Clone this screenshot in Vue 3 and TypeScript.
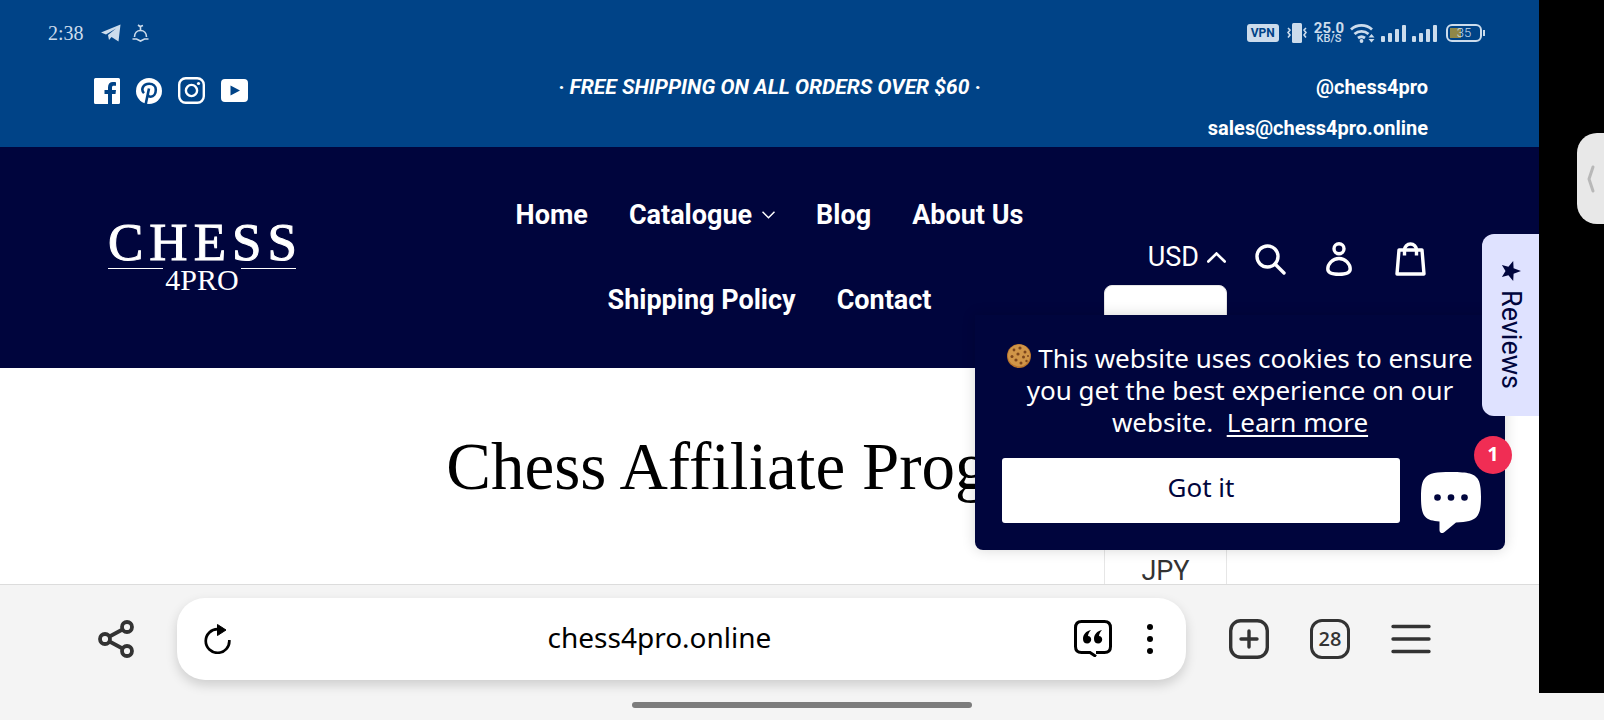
<script setup lang="ts">
import { ref } from 'vue'

interface NavItem {
  label: string
  hasMenu?: boolean
}

const navItems: NavItem[] = [
  { label: 'Home' },
  { label: 'Catalogue', hasMenu: true },
  { label: 'Blog' },
  { label: 'About Us' },
  { label: 'Shipping Policy' },
  { label: 'Contact' },
]

const currency = ref('USD')
const currencyOpen = ref(true)
const cookieVisible = ref(true)
const address = ref('chess4pro.online')
const tabCount = ref(28)
const unread = ref(1)
</script>

<template>
  <div class="device">
    <div class="main-row">
      <div class="screen">
        <div class="viewport">
          <div class="status">
            <span class="clock">2:38</span>
            <svg class="telegram" width="20" height="18" viewBox="0 0 20 18">
              <path d="M0 8.5 19.5 0.5 17.5 17.5 10.5 13 8 16 7 11 15 4.5 5 10.5Z" fill="currentColor" />
            </svg>
            <svg class="cloche" width="17" height="18" viewBox="0 0 17 18" fill="none" stroke="currentColor" stroke-width="1.6">
              <path d="M2.500 13C2.500 9 5 6.500 8.500 6.500s6 2.500 6 6.500M.5 15h4l4 2 4-2h4" />
              <path d="M6 1l2 1.500L11 1.500M8.500 2.500v4" />
            </svg>
            <div class="status-right">
              <span class="vpn">VPN</span>
              <svg class="vibrate" width="20" height="20" viewBox="0 0 20 20">
                <rect x="5" y="0" width="10" height="20" rx="1.500" fill="currentColor" />
                <path d="M1 5l2 2-2 2.500 2 2.500-2 2.500M19 5l-2 2 2 2.500-2 2.500 2 2.500" fill="none" stroke="currentColor" stroke-width="1.600" />
              </svg>
              <span class="speed"><b>25.0</b><span>KB/S</span></span>
              <svg class="wifi" width="25" height="20" viewBox="0 0 25 20">
                <g fill="none" stroke="currentColor" stroke-width="2.800">
                  <path d="M1 6.500a15.500 15.500 0 0 1 21 0" />
                  <path d="M4.500 11a10.500 10.500 0 0 1 14 0" />
                  <path d="M8 15a6 6 0 0 1 7 0" />
                </g>
                <circle cx="11.500" cy="18" r="1.900" fill="currentColor" />
                <path d="M18.500 14.500 21.500 11l3 3.500ZM18.500 16l3 3.500 3-3.500Z" fill="currentColor" />
              </svg>
              <svg v-for="n in 2" :key="n" class="signal" width="25" height="17" viewBox="0 0 25 17" fill="currentColor">
                <rect x="0" y="11" width="4" height="6" rx="1" />
                <rect x="7" y="8" width="4" height="9" rx="1" />
                <rect x="14" y="4" width="4" height="13" rx="1" />
                <rect x="21" y="0" width="4" height="17" rx="1" />
              </svg>
              <span class="battery"><span>35</span></span>
            </div>
          </div>

          <div class="topbar">
            <div class="social">
              <a href="#" aria-label="Facebook">
                <svg width="26" height="26" viewBox="0 0 26 26">
                  <path d="M1.500 0h23A1.500 1.500 0 0 1 26 1.500v23a1.500 1.500 0 0 1-1.500 1.500H18V16h3.500l.5-4h-4V9.500C18 8.300 18.500 7.700 19.800 7.700H22V4.200C21.500 4.100 20.300 4 19 4c-3 0-5 1.800-5 5.200V12h-3.500v4H14v10H1.500A1.500 1.500 0 0 1 0 24.500v-23A1.500 1.500 0 0 1 1.500 0Z" fill="currentColor" />
                </svg>
              </a>
              <a href="#" aria-label="Pinterest">
                <svg width="26" height="26" viewBox="0 0 26 26">
                  <circle cx="13" cy="13" r="13" fill="currentColor" />
                  <path d="M9.500 27 13 10.500M8 15.200C4.500 11.500 7 5.800 13.200 5.800c4 0 6.600 2.500 6.600 5.900 0 4.300-2.300 7-5 7-1.500 0-2.700-.8-3-2" fill="none" stroke="#004387" stroke-width="2.600" />
                </svg>
              </a>
              <a href="#" aria-label="Instagram">
                <svg width="27" height="27" viewBox="0 0 27 27" fill="none" stroke="currentColor" stroke-width="2.400">
                  <rect x="1.200" y="1.200" width="24.600" height="24.600" rx="6.500" />
                  <circle cx="13.500" cy="13.500" r="5.600" />
                  <circle cx="20.500" cy="6.500" r="1.600" fill="currentColor" stroke="none" />
                </svg>
              </a>
              <a href="#" aria-label="YouTube">
                <svg width="27" height="23" viewBox="0 0 27 23">
                  <path fill-rule="evenodd" d="M4 0h19a4 4 0 0 1 4 4v15a4 4 0 0 1-4 4H4a4 4 0 0 1-4-4V4a4 4 0 0 1 4-4Zm5.500 6.500v10L19 11.500Z" fill="currentColor" />
                </svg>
              </a>
            </div>
            <div class="promo">· FREE SHIPPING ON ALL ORDERS OVER $60 ·</div>
            <div class="contact">
              <a href="#">@chess4pro</a>
              <a href="#">sales@chess4pro.online</a>
            </div>
          </div>

          <header class="header">
            <a href="#" class="logo">
              <span class="logo-top">CHESS</span>
              <span class="logo-bottom">4PRO</span>
            </a>
            <nav class="nav">
              <a v-for="item in navItems" :key="item.label" href="#">
                {{ item.label }}
                <svg v-if="item.hasMenu" width="13" height="8" viewBox="0 0 13 8" fill="none" stroke="currentColor" stroke-width="1.500">
                  <path d="M.5.8 6.500 6.800 12.500.8" />
                </svg>
              </a>
            </nav>
            <div class="tools">
              <div class="currency">
                <button type="button" class="currency-button" :aria-expanded="currencyOpen" @click="currencyOpen = !currencyOpen">
                  {{ currency }}
                  <svg width="19" height="11" viewBox="0 0 19 11" fill="none" stroke="currentColor" stroke-width="2.600" stroke-linecap="round">
                    <path d="M1.300 9.500 9.500 1.500 17.700 9.500" />
                  </svg>
                </button>
                <div v-if="currencyOpen" class="currency-menu">
                  <button type="button" @click="currency = 'JPY'">JPY</button>
                </div>
              </div>
              <button type="button" class="tool search" aria-label="Search">
                <svg width="31" height="31" viewBox="0 0 31 31" fill="none" stroke="currentColor" stroke-width="3.400" stroke-linecap="round">
                  <circle cx="12.500" cy="12.500" r="10.500" />
                  <path d="M20 20l9 9" />
                </svg>
              </button>
              <button type="button" class="tool" aria-label="Account">
                <svg width="26" height="34" viewBox="0 0 26 34" fill="none" stroke="currentColor" stroke-width="3.400">
                  <circle cx="13" cy="6.800" r="5" />
                  <path d="M13 16.500c-6.500 0-11.200 5.500-11.200 10.500 0 3.500 4 5.300 11.200 5.300s11.200-1.800 11.200-5.300c0-5-4.700-10.500-11.200-10.500Z" />
                </svg>
              </button>
              <button type="button" class="tool" aria-label="Cart">
                <svg width="31" height="34" viewBox="0 0 31 34" fill="none" stroke="currentColor" stroke-width="3.400" stroke-linejoin="round">
                  <path d="M4 8h23l2 24h-27Z" />
                  <path d="M9.500 13.500V8a6 6 0 0 1 12 0v5.500" />
                </svg>
              </button>
            </div>
          </header>

          <main class="hero">
            <h1>Chess Affiliate Program</h1>
          </main>

          <section v-if="cookieVisible" class="cookie">
            <p>
              <svg class="biscuit" width="24" height="24" viewBox="0 0 24 24">
                <circle cx="12" cy="12" r="12" fill="#b9742c" />
                <circle cx="12" cy="11.500" r="11" fill="#d09548" />
                <g fill="#7d461c">
                  <circle cx="7" cy="6" r="1.400" /><circle cx="13" cy="4" r="1.600" /><circle cx="18" cy="8" r="1.500" />
                  <circle cx="11" cy="10" r="1.600" /><circle cx="5" cy="12.500" r="1.500" /><circle cx="16.500" cy="13" r="1.500" />
                  <circle cx="9" cy="16" r="1.600" /><circle cx="14" cy="19" r="1.500" /><circle cx="19.500" cy="17" r="1.200" />
                  <circle cx="21" cy="12" r="1" />
                </g>
              </svg>
              This website uses cookies to ensure you get the best experience on our website.&nbsp;
              <a href="#">Learn more</a>
            </p>
            <button type="button" class="accept" @click="cookieVisible = false">Got it</button>
          </section>

          <button type="button" class="chat" aria-label="Chat">
            <svg width="60" height="61" viewBox="0 0 60 61">
              <path d="M30 0C48 0 53 2 56.500 6.500 59 10 60 16 60 25c0 10-1 16-4.500 20C52 48.500 46 50 35 50.500L23.500 60c-2.500 2-5 1-5-2v-8.500C12 49 7 48 4 44.500 1 41 0 35 0 25 0 15 1 9 4.500 5.500 8.500 1 15 0 30 0Z" fill="#fff" />
              <g fill="#00053d"><circle cx="16.500" cy="25.500" r="3.300" /><circle cx="30" cy="25.500" r="3.300" /><circle cx="43.500" cy="25.500" r="3.300" /></g>
            </svg>
            <span class="chat-badge">{{ unread }}</span>
          </button>

          <button type="button" class="reviews">
            <svg width="20" height="20" viewBox="0 0 20 20">
              <path d="M20 10 12.600 12.700 12.200 20 7.400 14.300.9 16 4.500 10 .9 4 7.400 5.700 12.200 0l.4 7.300Z" fill="currentColor" />
            </svg>
            <span>Reviews</span>
          </button>
        </div>

        <footer class="browser">
          <button type="button" class="share" aria-label="Share">
            <svg width="36" height="38" viewBox="0 0 36 38" fill="none" stroke="currentColor" stroke-width="3.800">
              <circle cx="7" cy="19" r="5" /><circle cx="29" cy="7" r="5" /><circle cx="29" cy="31" r="5" />
              <path d="M11.500 16.500 24.500 9.500M11.500 21.500l13 7" />
            </svg>
          </button>
          <div class="address">
            <button type="button" aria-label="Reload">
              <svg width="27" height="30" viewBox="0 0 27 30">
                <path d="M14 5.200A11.800 11.800 0 1 0 25.300 16" fill="none" stroke="currentColor" stroke-width="2.700" />
                <path d="M13.500.5 22 6l-8.500 5.500Z" fill="currentColor" stroke="currentColor" stroke-linejoin="round" />
              </svg>
            </button>
            <input v-model="address" type="text" aria-label="Address" />
            <button type="button" class="quote" aria-label="Reader">
              <svg width="38" height="37" viewBox="0 0 38 37">
                <path d="M22 32.500h8.500c4.500 0 6-2 6-6V8c0-4.500-2-6.500-6-6.500h-23c-4 0-6 2-6 6.500v18.500c0 4 2 6 6 6H16l6 4" fill="none" stroke="currentColor" stroke-width="3" />
                <path d="M17 10c-5 1-8 4.500-8 9 0 3 1.800 4.500 4.200 4.500 2.300 0 4-1.500 4-3.900 0-2-1.400-3.500-3.200-3.500.2-2.600 1.500-4.300 3-6.100ZM28 10c-5 1-8 4.500-8 9 0 3 1.800 4.500 4.200 4.500 2.300 0 4-1.500 4-3.900 0-2-1.400-3.500-3.200-3.500.2-2.600 1.500-4.300 3-6.100Z" fill="currentColor" />
              </svg>
            </button>
            <button type="button" aria-label="More">
              <svg width="6" height="30" viewBox="0 0 6 30" fill="currentColor">
                <circle cx="3" cy="3" r="3" /><circle cx="3" cy="15" r="3" /><circle cx="3" cy="27" r="3" />
              </svg>
            </button>
          </div>
          <div class="browser-tools">
            <button type="button" aria-label="New tab">
              <svg width="40" height="40" viewBox="0 0 40 40" fill="none" stroke="currentColor" stroke-width="3.400" stroke-linecap="round">
                <rect x="1.700" y="1.700" width="36.600" height="36.600" rx="10" />
                <path d="M20 12v16M12 20h16" />
              </svg>
            </button>
            <button type="button" class="tabs">{{ tabCount }}</button>
            <button type="button" aria-label="Menu">
              <svg width="40" height="30" viewBox="0 0 40 30" fill="none" stroke="currentColor" stroke-width="3.400" stroke-linecap="round">
                <path d="M2 2.500h36M2 15h36M2 27.500h36" />
              </svg>
            </button>
          </div>
        </footer>
      </div>

      <aside class="edge">
        <button type="button" class="handle" aria-label="Sidebar">
          <svg width="8" height="28" viewBox="0 0 8 28" fill="none" stroke="#b8b8b8" stroke-width="3" stroke-linecap="round" stroke-linejoin="round">
            <path d="M6 2 2 14l4 12" />
          </svg>
        </button>
      </aside>
    </div>
    <div class="gesture"><span></span></div>
  </div>
</template>

<style>
body {
  margin: 0;
  background: #f4f4f4;
}
</style>

<style scoped>
.device {
  display: flex;
  flex-direction: column;
  min-height: 100vh;
  font-family: Roboto, "Liberation Sans", sans-serif;
  color: #000;
  background: #f4f4f4;
}
.device * {
  box-sizing: border-box;
}
svg {
  display: block;
  flex: none;
}
a {
  color: inherit;
  text-decoration: none;
}
button {
  margin: 0;
  padding: 0;
  border: 0;
  background: none;
  font: inherit;
  color: inherit;
  cursor: pointer;
}
.main-row {
  flex: 1;
  display: flex;
}
.screen {
  flex: 1;
  min-width: 0;
  display: flex;
  flex-direction: column;
}
.viewport {
  flex: 1;
  position: relative;
  overflow: hidden;
  display: flex;
  flex-direction: column;
  background: #fff;
}

/* status bar */
.status {
  display: flex;
  align-items: center;
  height: 66px;
  padding: 0 57px 0 48px;
  color: #ccdcec;
  background: #004387;
}
.clock {
  font-family: "Liberation Serif", serif;
  font-size: 20px;
  margin-right: 17px;
}
.cloche {
  margin-left: 11px;
}
.status-right {
  display: flex;
  align-items: center;
  margin-left: auto;
}
.vpn {
  padding: 0 4px;
  border-radius: 3px;
  background: #ccdcec;
  color: #004387;
  font: 700 12px/18px Roboto, sans-serif;
}
.vibrate {
  margin-left: 8px;
}
.speed {
  display: flex;
  flex-direction: column;
  align-items: center;
  margin: 0 6px 0 7px;
  font-size: 11px;
  font-weight: 500;
  line-height: 10px;
}
.speed b {
  font-size: 15px;
  line-height: 11px;
}
.signal {
  margin-left: 6px;
}
.battery {
  position: relative;
  margin-left: 9px;
  width: 36px;
  height: 18px;
  border: 2px solid #ccdcec;
  border-radius: 6px;
  background: linear-gradient(#8f8748, #8f8748) 2px 2px / 11px 10px no-repeat;
  font: 300 13px/14px Roboto, sans-serif;
  text-align: center;
}
.battery::after {
  content: "";
  position: absolute;
  right: -5px;
  top: 4px;
  width: 2px;
  height: 6px;
  background: #ccdcec;
}

/* announcement bar */
.topbar {
  display: grid;
  grid-template-columns: 1fr auto 1fr;
  height: 81px;
  padding: 0 94px;
  background: #004387;
  color: #fff;
  font-size: 20px;
  font-weight: 700;
  line-height: 41px;
}
.social {
  display: flex;
  align-items: center;
  gap: 16px;
  height: 49px;
}
.promo {
  padding-top: 1px;
  font-style: italic;
  font-size: 21px;
}
.contact {
  display: flex;
  flex-direction: column;
  align-items: flex-end;
  padding: 1px 17px 0 0;
}

/* site header */
.header {
  position: relative;
  z-index: 1;
  display: grid;
  grid-template-columns: 1fr 550px 1fr;
  align-items: center;
  height: 221px;
  padding: 0 94px;
  background: #00053d;
  color: #fff;
}
.logo {
  justify-self: start;
  display: flex;
  flex-direction: column;
  gap: 4px;
  width: 188px;
  margin-left: 14px;
  padding-bottom: 4px;
  font-family: "Liberation Serif", serif;
}
.logo-top {
  font-size: 53px;
  line-height: 44px;
  letter-spacing: 6px;
  white-space: nowrap;
  -webkit-text-stroke: 1px #fff;
}
.logo-bottom {
  display: flex;
  gap: 2px;
  font-size: 30px;
  line-height: 24px;
}
.logo-bottom::before,
.logo-bottom::after {
  content: "";
  flex: 1;
  height: 1px;
  background: #fff;
}
.nav {
  display: flex;
  flex-wrap: wrap;
  justify-content: center;
  column-gap: 41px;
  font-size: 27px;
  font-weight: 700;
  line-height: 85px;
}
.nav a {
  display: flex;
  align-items: center;
  gap: 10px;
}
.tools {
  display: flex;
  align-items: center;
  justify-content: flex-end;
  gap: 43px;
  padding: 3px 19px 0 0;
}
.currency {
  position: relative;
  margin-bottom: 4px;
}
.currency-button {
  display: flex;
  align-items: center;
  gap: 8px;
  font-size: 27px;
  line-height: 36px;
}
.currency-menu {
  position: absolute;
  right: -1px;
  top: 46px;
  width: 123px;
  height: 303px;
  display: flex;
  flex-direction: column;
  justify-content: flex-end;
  border: 1px solid #e6e6e6;
  border-radius: 8px 8px 0 0;
  background: #fff;
  color: #333;
  font-size: 27px;
  line-height: 32px;
}
.search {
  margin: 0 -3px 0 -14px;
}

/* hero */
.hero {
  flex: 1;
  display: flex;
  justify-content: center;
  padding-top: 60px;
}
.hero h1 {
  margin: 0;
  font: 400 67px/76px "Liberation Serif", serif;
  white-space: nowrap;
}

/* overlays */
.cookie {
  position: absolute;
  z-index: 2;
  right: 34px;
  bottom: 34px;
  width: 530px;
  padding: 27px;
  border-radius: 0 0 8px 8px;
  background: #00053d;
  box-shadow: 0 0 14px rgba(0, 0, 0, 0.16);
  color: #fff;
  font: 400 26px/32px "Noto Sans", sans-serif;
  text-align: center;
}
.cookie p {
  margin: 0 0 20px;
}
.cookie a {
  text-decoration: underline;
  text-decoration-thickness: 2px;
  text-underline-offset: 3px;
}
.biscuit {
  display: inline-block;
}
.accept {
  display: block;
  width: 398px;
  height: 65px;
  padding-bottom: 8px;
  border-radius: 3px;
  background: #fff;
  color: #00053d;
}
.chat {
  position: absolute;
  z-index: 3;
  right: 58px;
  bottom: 51px;
}
.chat-badge {
  position: absolute;
  left: 53px;
  top: -36px;
  width: 38px;
  height: 38px;
  border-radius: 50%;
  background: #f02d54;
  color: #fff;
  font: 700 20px/36px "Noto Sans", sans-serif;
  text-align: center;
}
.reviews {
  position: absolute;
  z-index: 3;
  right: 0;
  top: 234px;
  width: 57px;
  height: 182px;
  display: flex;
  flex-direction: column;
  align-items: center;
  justify-content: center;
  gap: 9px;
  border-radius: 12px 0 0 12px;
  background: #dfe2ff;
  color: #00053d;
  font-size: 27px;
}
.reviews span {
  writing-mode: vertical-rl;
}

/* browser chrome */
.browser {
  display: flex;
  align-items: center;
  height: 109px;
  padding: 0 108px 1px 98px;
  border-top: 1px solid #dcdcdc;
  background: #f4f4f4;
  color: #333;
}
.address {
  flex: 1;
  display: flex;
  align-items: center;
  height: 82px;
  margin: 0 43px;
  padding: 0 33px 0 27px;
  border-radius: 28px;
  background: #fff;
  box-shadow: 0 5px 12px rgba(0, 0, 0, 0.16);
  color: #000;
}
.address input {
  flex: 1;
  min-width: 0;
  margin-left: 14px;
  padding: 0 0 4px;
  border: 0;
  outline: 0;
  background: none;
  color: inherit;
  font: 400 28px/38px "Noto Sans", sans-serif;
  text-align: center;
}
.quote {
  margin-right: 35px;
}
.browser-tools {
  display: flex;
  align-items: center;
  gap: 41px;
}
.tabs {
  width: 40px;
  height: 40px;
  border: 3px solid #333;
  border-radius: 12px;
  font: 600 20px/32px "Open Sans", sans-serif;
}

/* device edges */
.edge {
  width: 65px;
  display: flex;
  flex-direction: column;
  align-items: flex-end;
  padding-top: 133px;
  background: #000;
}
.handle {
  width: 27px;
  height: 91px;
  padding-left: 10px;
  border-radius: 20px 0 0 20px;
  background: #e8e8e8;
}
.gesture {
  display: flex;
  justify-content: center;
  height: 27px;
  padding-top: 9px;
}
.gesture span {
  width: 340px;
  height: 6px;
  border-radius: 3px;
  background: #7c7c7c;
}
</style>
